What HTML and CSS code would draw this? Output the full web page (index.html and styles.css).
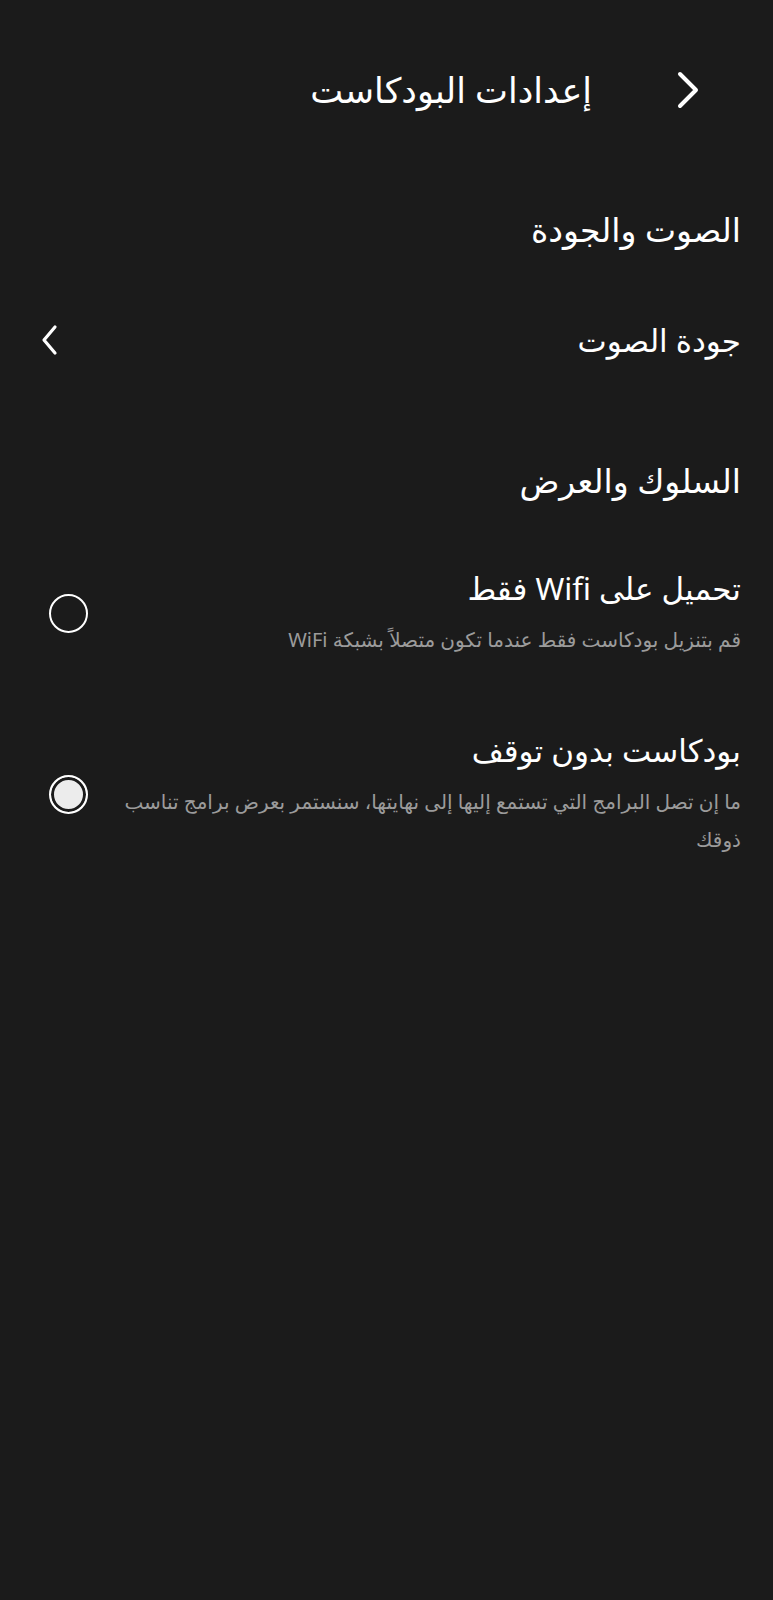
FILE: index.html
```html
<!DOCTYPE html>
<html lang="ar" dir="rtl">
<head>
<meta charset="utf-8">
<link rel="stylesheet" href="styles.css">
</head>
<body>
<div class="screen">
  <header class="topbar">
    <svg class="back" viewBox="0 0 24 40" width="24" height="40"><path d="M4 4 L20 20 L4 36" fill="none" stroke="#fff" stroke-width="4" stroke-linecap="round" stroke-linejoin="round"/></svg>
    <h1 class="title">إعدادات البودكاست</h1>
  </header>

  <h2 class="section s1">الصوت والجودة</h2>
  <div class="nav-row">
    <span class="nav-label">جودة الصوت</span>
    <svg class="chev" viewBox="0 0 20 32" width="20" height="32"><path d="M15 3 L4 16 L15 29" fill="none" stroke="#fff" stroke-width="3.2" stroke-linecap="round" stroke-linejoin="round"/></svg>
  </div>

  <h2 class="section s2">السلوك والعرض</h2>
  <div class="opt o1">
    <div class="opt-text">
      <div class="opt-title">تحميل على Wifi فقط</div>
      <div class="opt-sub">قم بتنزيل بودكاست فقط عندما تكون متصلاً بشبكة WiFi</div>
    </div>
    <span class="radio"></span>
  </div>
  <div class="opt o2">
    <div class="opt-text">
      <div class="opt-title">بودكاست بدون توقف</div>
      <div class="opt-sub">ما إن تصل البرامج التي تستمع إليها إلى نهايتها، سنستمر بعرض برامج تناسب ذوقك</div>
    </div>
    <span class="radio on"></span>
  </div>
</div>
</body>
</html>
```

FILE: styles.css
```css
html, body {
  margin: 0;
  padding: 0;
  background: #1b1b1b;
}
body {
  font-family: "Noto Sans", "DejaVu Sans", sans-serif;
  color: #ffffff;
  direction: rtl;
  min-height: 1600px;
}
.screen {
  padding: 0 32px 0 30px;
}
.topbar {
  height: 180px;
  display: flex;
  align-items: center;
  padding-right: 41px;
  gap: 84px;
}
.back {
  display: block;
  flex: none;
}
.title {
  margin: 0;
  font-size: 35px;
  font-weight: 400;
  line-height: 40px;
}
.section {
  margin: 0;
  font-size: 33px;
  font-weight: 400;
  line-height: 40px;
}
.s1 { margin-top: 30px; }
.s2 { margin-top: 91px; }
.nav-row {
  margin-top: 60px;
  height: 60px;
  display: flex;
  align-items: center;
  justify-content: space-between;
}
.nav-label {
  font-size: 31px;
  line-height: 40px;
}
.chev {
  display: block;
  margin-left: 10px;
}
.opt {
  display: flex;
  align-items: center;
  justify-content: space-between;
  gap: 18px;
}
.o1 { margin-top: 67px; }
.o2 { margin-top: 71px; }
.opt-title {
  font-size: 31px;
  line-height: 40px;
}
.opt-sub {
  margin-top: 13px;
  font-size: 20px;
  line-height: 38px;
  color: #9b9b9b;
}
.radio {
  flex: none;
  width: 35px;
  height: 35px;
  border: 2.5px solid #ffffff;
  border-radius: 50%;
  margin-left: 19px;
  box-sizing: content-box;
}
.radio.on {
  background: #ececec;
  box-shadow: inset 0 0 0 3px #1b1b1b;
}
```
